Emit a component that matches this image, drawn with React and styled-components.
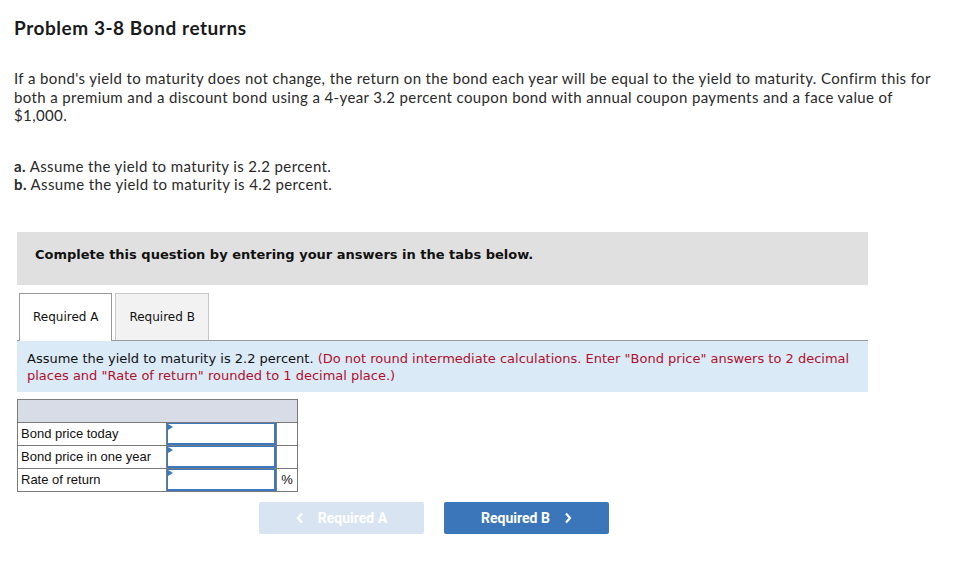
import styled, { createGlobalStyle } from "styled-components";

const GlobalStyle = createGlobalStyle`
  body {
    margin: 0;
    background: #fff;
  }
`;

const Page = styled.div`
  width: 962px;
  height: 562px;
  padding: 0 0 0 14px;
  box-sizing: border-box;
  font-family: Lato, "Open Sans", sans-serif;
  color: #222;
  overflow: hidden;
`;

const Title = styled.h1`
  margin: 0;
  padding-top: 17px;
  font-size: 19px;
  line-height: 22px;
  letter-spacing: 0.55px;
  font-weight: 700;
  color: #1a1a1a;
`;

const Para = styled.div`
  margin: ${(p) => p.$top || 0}px 0 0;
  font-size: 15px;
  line-height: 18.5px;
  letter-spacing: 0.38px;
  width: 922px;
  color: #2a2a2a;
`;

const Item = styled.div`
  b {
    font-weight: 700;
  }
`;

const Section = styled.div`
  width: 851px;
  margin: 38px 0 0 3px;
  font-family: "DejaVu Sans", Verdana, sans-serif;
`;

const Banner = styled.div`
  height: 53px;
  box-sizing: border-box;
  background: #e0e0e0;
  display: flex;
  align-items: center;
  padding: 0 0 8px 18px;
  font-size: 13px;
  font-weight: 700;
  color: #111;
`;

const Tabs = styled.div`
  display: flex;
  gap: 3px;
  margin-top: 8px;
  padding-left: 2px;
  border-bottom: 1px solid #9a9a9a;
  height: 47px;
  align-items: flex-end;
`;

const Tab = styled.div`
  box-sizing: border-box;
  padding: 0 13px;
  display: flex;
  align-items: center;
  font-size: 12px;
  color: #111;
  background: ${(p) => (p.$active ? "#fff" : "#f2f2f2")};
  border: 1px solid ${(p) => (p.$active ? "#9a9a9a" : "#c8c8c8")};
  border-bottom: none;
  margin-bottom: ${(p) => (p.$active ? "-1px" : "0")};
  height: ${(p) => (p.$active ? "48px" : "47px")};
`;

const Info = styled.div`
  background: #dbeaf7;
  padding: 9px 10px 8px;
  font-size: 13px;
  line-height: 17px;
  color: #111;
`;

const Red = styled.span`
  color: #b0102c;
`;

const Table = styled.table`
  margin-top: 7px;
  border-collapse: collapse;
  font-family: "Liberation Sans", Arial, sans-serif;
  font-size: 13px;
  color: #111;
  td {
    border: 1px solid #7a7a7a;
    padding: 0;
    height: 22px;
  }
`;

const HeadCell = styled.td`
  background: #d8dce6;
`;

const Label = styled.td`
  width: 145px;
  padding-left: 3px !important;
  vertical-align: middle;
`;

const InputCell = styled.td`
  width: 109px;
  padding: 0 !important;
`;

const Field = styled.div`
  position: relative;
  height: 22px;
  border-style: solid;
  border-width: 1px 2px 2px 1px;
  border-color: #3a78c2;
  box-sizing: border-box;
  &::before {
    content: "";
    position: absolute;
    left: 0;
    top: 0;
    border-left: 5px solid #3a78c2;
    border-top: 3px solid transparent;
    border-bottom: 3px solid transparent;
  }
`;

const Unit = styled.td`
  width: 20px;
  text-align: center;
  vertical-align: middle;
`;

const Nav = styled.div`
  display: flex;
  gap: 20px;
  margin: 10px 0 0 242px;
`;

const NavButton = styled.div`
  width: 165px;
  height: 32px;
  border-radius: 2px;
  display: flex;
  align-items: center;
  justify-content: center;
  gap: 14px;
  font-family: Roboto, "Liberation Sans", sans-serif;
  font-size: 14px;
  font-weight: 700;
  color: #fff;
  background: ${(p) => (p.$disabled ? "#d9e4f2" : "#3a76b9")};
  svg {
    display: block;
  }
`;

const Chevron = ({ dir }) => (
  <svg width="8" height="12" viewBox="0 0 8 12">
    <path
      d={dir === "left" ? "M6 1.5 L2 6 L6 10.5" : "M2 1.5 L6 6 L2 10.5"}
      fill="none"
      stroke="#fff"
      strokeWidth="2.2"
    />
  </svg>
);

const rows = [
  { label: "Bond price today", unit: "" },
  { label: "Bond price in one year", unit: "" },
  { label: "Rate of return", unit: "%" },
];

export default function App() {
  return (
    <>
      <GlobalStyle />
      <Page>
        <Title>Problem 3-8 Bond returns</Title>
        <Para $top={30}>
          If a bond's yield to maturity does not change, the return on the bond each year
          will be equal to the yield to maturity. Confirm this for both a premium and a
          discount bond using a 4-year 3.2 percent coupon bond with annual coupon payments
          and a face value of $1,000.
        </Para>
        <Para $top={32}>
          <Item>
            <b>a.</b> Assume the yield to maturity is 2.2 percent.
          </Item>
          <Item>
            <b>b.</b> Assume the yield to maturity is 4.2 percent.
          </Item>
        </Para>
        <Section>
          <Banner>Complete this question by entering your answers in the tabs below.</Banner>
          <Tabs>
            <Tab $active>Required A</Tab>
            <Tab>Required B</Tab>
          </Tabs>
          <Info>
            Assume the yield to maturity is 2.2 percent.{" "}
            <Red>
              (Do not round intermediate calculations. Enter "Bond price" answers to 2
              decimal places and "Rate of return" rounded to 1 decimal place.)
            </Red>
          </Info>
          <Table>
            <tbody>
              <tr>
                <HeadCell colSpan={3} />
              </tr>
              {rows.map((r) => (
                <tr key={r.label}>
                  <Label>{r.label}</Label>
                  <InputCell>
                    <Field />
                  </InputCell>
                  <Unit>{r.unit}</Unit>
                </tr>
              ))}
            </tbody>
          </Table>
          <Nav>
            <NavButton $disabled>
              <Chevron dir="left" />
              Required A
            </NavButton>
            <NavButton>
              Required B
              <Chevron dir="right" />
            </NavButton>
          </Nav>
        </Section>
      </Page>
    </>
  );
}
